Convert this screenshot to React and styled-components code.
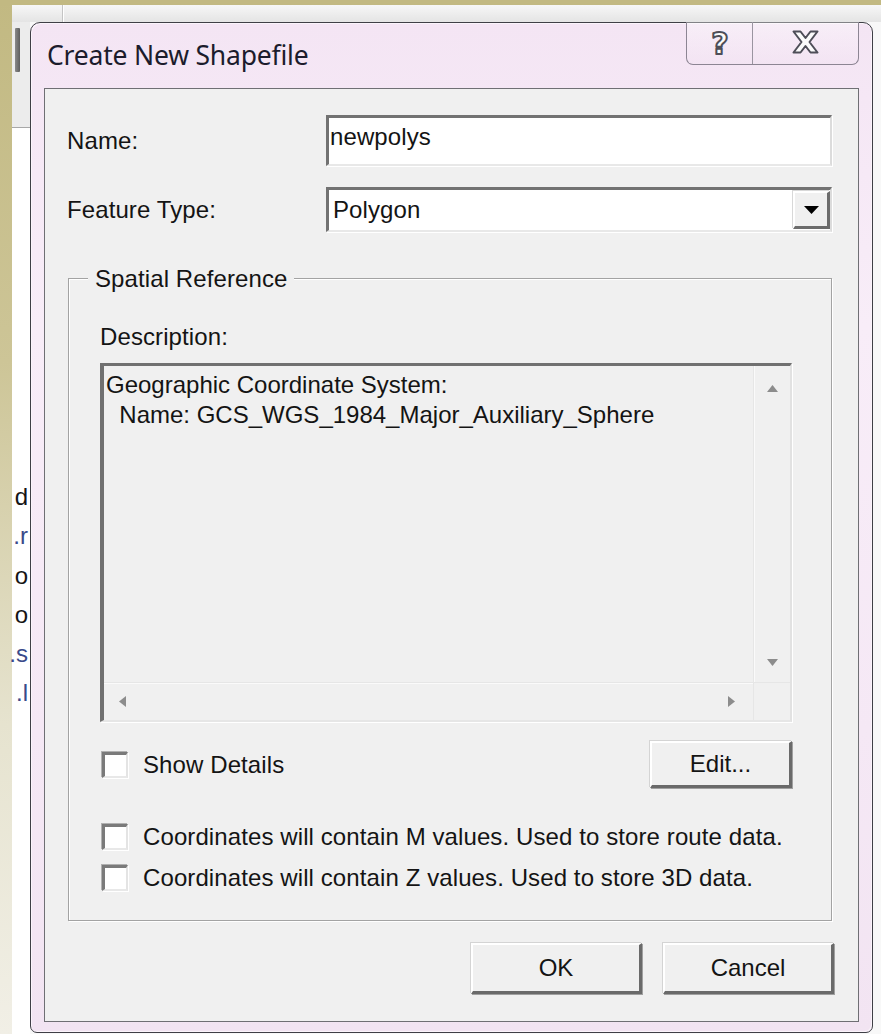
import styled, { createGlobalStyle } from "styled-components";

const GlobalStyle = createGlobalStyle`
  html, body {
    margin: 0;
    padding: 0;
    background: #c2b982;
  }
  * {
    box-sizing: border-box;
  }
`;

const Screen = styled.div`
  width: 881px;
  height: 1034px;
  display: flex;
  flex-direction: column;
  overflow: hidden;
  background: linear-gradient(180deg, #c2b982 0%, #cdc597 35%, #e6e3cf 70%, #f1efe6 100%);
  font-family: "Liberation Sans", Arial, sans-serif;
  color: #141414;
`;

const TopStrip = styled.div`
  height: 5px;
  flex: none;
  background: #c2b982;
`;

const Desk = styled.div`
  flex: 1;
  display: flex;
  padding-left: 12px;
  min-height: 0;
`;

const BackWindow = styled.div`
  flex: 1;
  display: flex;
  flex-direction: column;
  background: #f8f8f8;
`;

const BackBar = styled.div`
  height: 17px;
  flex: none;
  display: flex;
  background: linear-gradient(180deg, #f7f7f7, #e4e4e4);
`;

const BackBarCell = styled.div`
  width: 51px;
  border-right: 1px solid #c4c4c4;
  box-shadow: 1px 0 0 #ffffff;
`;

const BackBody = styled.div`
  flex: 1;
  display: flex;
  min-height: 0;
`;

const Gutter = styled.div`
  width: 18px;
  flex: none;
  display: flex;
  flex-direction: column;
  background: #ffffff;
`;

const GutterHead = styled.div`
  height: 106px;
  flex: none;
  display: flex;
  padding: 6px 0 0 3px;
  background: #ececec;
  border-bottom: 1px solid #a8a8a8;
`;

const GutterBar = styled.div`
  width: 5px;
  height: 44px;
  background: linear-gradient(90deg, #8a8a8a, #5e5e5e);
  border-radius: 1px;
`;

const GutterText = styled.div`
  padding: 349px 2px 0 0;
  display: flex;
  flex-direction: column;
  align-items: flex-end;
  font-size: 24px;
  line-height: 39.3px;
  white-space: nowrap;
`;

const Fragment = styled.span`
  color: ${(p) => (p.$link ? "#3a4a8a" : "#151515")};
`;

const Dialog = styled.div`
  width: 843px;
  flex: none;
  height: 1011px;
  display: flex;
  flex-direction: column;
  padding: 0 13px 10px 13px;
  border: 1px solid #3f3f46;
  border-radius: 10px 10px 7px 7px;
  background: linear-gradient(180deg, #f4e5f4 0%, #f8edf8 30%, #f5e8f5 70%, #f2e4f2 100%);
  box-shadow: inset 1px 1px 0 #fbf4fb, inset -1px -1px 0 #fbf4fb;
`;

const TitleBar = styled.div`
  height: 65px;
  flex: none;
  display: flex;
  justify-content: space-between;
  align-items: flex-start;
`;

const Title = styled.div`
  margin: 15px 0 0 3px;
  font-family: "Noto Sans", "Open Sans", sans-serif;
  font-size: 26.5px;
  line-height: 34px;
  color: #1c1c2c;
  letter-spacing: -0.2px;
`;

const CaptionGroup = styled.div`
  display: flex;
  height: 43px;
  margin: -1px 0 0 0;
  border: 1px solid #8c8593;
  border-top: none;
  border-radius: 0 0 7px 7px;
  background: linear-gradient(180deg, rgba(255, 255, 255, 0.35), rgba(240, 225, 240, 0.4));
  overflow: hidden;
`;

const CaptionButton = styled.div`
  width: ${(p) => p.$w}px;
  display: flex;
  align-items: center;
  justify-content: center;
  padding-bottom: 2px;
  & + & {
    border-left: 1px solid #9a94a0;
  }
`;

const Client = styled.div`
  flex: 1;
  display: flex;
  flex-direction: column;
  padding: 26px 26px 0 22px;
  border: 1px solid #6f6f74;
  background: #f0f0f0;
  font-size: 24px;
  letter-spacing: 0.1px;
`;

const FieldRow = styled.div`
  display: grid;
  grid-template-columns: 259px 1fr;
  align-items: center;
  height: ${(p) => p.$h}px;
  margin-bottom: ${(p) => p.$mb || 0}px;
`;

const Label = styled.div`
  line-height: 28px;
`;

const Sunken = styled.div`
  height: 100%;
  display: flex;
  align-items: ${(p) => (p.$top ? "flex-start" : "center")};
  background: #ffffff;
  border-top: 3px solid #727272;
  border-left: 3px solid #727272;
  border-right: 2px solid #dcdcdc;
  border-bottom: 2px solid #e8e8e8;
  box-shadow: 1px 1px 0 #ffffff;
`;

const FieldText = styled.div`
  flex: 1;
  padding: ${(p) => p.$pad};
  line-height: 28px;
`;

const DropButton = styled.div`
  width: 37px;
  height: 38px;
  display: flex;
  align-items: center;
  justify-content: center;
  background: #f0f0f0;
  border-top: 2px solid #ffffff;
  border-left: 2px solid #ffffff;
  border-right: 3px solid #6c6c6c;
  border-bottom: 3px solid #6c6c6c;
  box-shadow: -1px -1px 0 #d8d8d8;
`;

const Group = styled.div`
  margin: 46px 0 0 1px;
  display: flex;
  flex-direction: column;
  padding: 0 39px 28px 31px;
  border: 1px solid #a3a3a3;
  box-shadow: inset 1px 1px 0 #ffffff, 1px 1px 0 #ffffff;
`;

const Legend = styled.div`
  align-self: flex-start;
  margin: -14px 0 0 -12px;
  padding: 0 7px;
  line-height: 28px;
  background: #f0f0f0;
`;

const Caption = styled.div`
  margin-top: 30px;
  line-height: 28px;
`;

const DescBox = styled.div`
  margin-top: 12px;
  height: 359px;
  display: grid;
  grid-template-columns: 1fr 37px;
  grid-template-rows: 1fr 38px;
  background: #f0f0f0;
  border-top: 3px solid #707070;
  border-left: 4px solid #707070;
  border-right: 2px solid #e2e2e2;
  border-bottom: 2px solid #e6e6e6;
  box-shadow: 1px 1px 0 #ffffff;
`;

const DescText = styled.div`
  padding: 4px 0 0 2px;
  line-height: 30px;
  letter-spacing: 0;
  white-space: pre;
  overflow: hidden;
`;

const VScroll = styled.div`
  display: flex;
  flex-direction: column;
  justify-content: space-between;
  border-left: 1px solid #e6e6e6;
  box-shadow: inset 1px 0 0 #fafafa;
`;

const HScroll = styled.div`
  display: flex;
  justify-content: space-between;
  border-top: 1px solid #e6e6e6;
  box-shadow: inset 0 1px 0 #fafafa;
`;

const Corner = styled.div`
  border-top: 1px solid #e6e6e6;
  border-left: 1px solid #e6e6e6;
`;

const ArrowCell = styled.div`
  width: ${(p) => p.$w || 37}px;
  height: ${(p) => p.$h || 37}px;
  display: flex;
  align-items: center;
  justify-content: center;
`;

const OptionRow = styled.div`
  display: flex;
  align-items: center;
  justify-content: space-between;
  height: ${(p) => p.$h}px;
  margin-top: ${(p) => p.$mt}px;
`;

const CheckLabel = styled.label`
  display: flex;
  align-items: center;
  gap: 15px;
  line-height: 28px;
  margin-left: 2px;
`;

const CheckBox = styled.span`
  width: 26px;
  height: 26px;
  flex: none;
  background: #ffffff;
  border-top: 3px solid #7a7a7a;
  border-left: 3px solid #7a7a7a;
  border-right: 2px solid #e4e4e4;
  border-bottom: 2px solid #e8e8e8;
  box-shadow: -1px -1px 0 #b0b0b0, 1px 1px 0 #ffffff;
`;

const Button = styled.button`
  width: ${(p) => p.$w}px;
  height: ${(p) => p.$h}px;
  padding: 0;
  font-family: "Liberation Sans", Arial, sans-serif;
  font-size: 24px;
  color: #141414;
  background: #f0f0f0;
  border-top: 2px solid #ffffff;
  border-left: 2px solid #ffffff;
  border-right: 3px solid #6a6a6a;
  border-bottom: 3px solid #6a6a6a;
  box-shadow: -1px -1px 0 #d4d4d4, 1px 1px 0 #a0a0a0;
  border-radius: 0;
`;

const ButtonRow = styled.div`
  display: flex;
  justify-content: flex-end;
  gap: 21px;
  margin: 22px -2px 0 0;
`;

const Triangle = ({ dir, color = "#8c8c8c", w = 11, h = 7 }) => {
  const pts = {
    up: `0,${h} ${w / 2},0 ${w},${h}`,
    down: `0,0 ${w},0 ${w / 2},${h}`,
    left: `${h},0 ${h},${w} 0,${w / 2}`,
    right: `0,0 0,${w} ${h},${w / 2}`,
  }[dir];
  const vertical = dir === "up" || dir === "down";
  return (
    <svg width={vertical ? w : h} height={vertical ? h : w}>
      <polygon points={pts} fill={color} />
    </svg>
  );
};

const HelpIcon = () => (
  <svg width="28" height="36" viewBox="0 0 28 36">
    <text
      x="14"
      y="30"
      textAnchor="middle"
      fontFamily="DejaVu Sans, sans-serif"
      fontWeight="bold"
      fontSize="30"
      fill="#fbfbfb"
      stroke="#4e4e58"
      strokeWidth="2"
      strokeLinejoin="round"
    >
      ?
    </text>
  </svg>
);

const CloseIcon = () => (
  <svg width="27" height="24" viewBox="0 0 27 24">
    <polygon
      points="1.5,1.5 8.5,1.5 13.5,8 18.5,1.5 25.5,1.5 17.5,12 25.5,22.5 18.5,22.5 13.5,16 8.5,22.5 1.5,22.5 9.5,12"
      fill="#fbfbfb"
      stroke="#4e4e58"
      strokeWidth="2"
      strokeLinejoin="round"
    />
  </svg>
);

const fragments = [
  { t: "d" },
  { t: ".r", link: true },
  { t: "o" },
  { t: "o" },
  { t: ".s", link: true },
  { t: ".l", link: true },
];

export default function App() {
  return (
    <>
      <GlobalStyle />
      <Screen>
        <TopStrip />
        <Desk>
          <BackWindow>
            <BackBar>
              <BackBarCell />
            </BackBar>
            <BackBody>
              <Gutter>
                <GutterHead>
                  <GutterBar />
                </GutterHead>
                <GutterText>
                  {fragments.map((f, i) => (
                    <Fragment key={i} $link={f.link}>
                      {f.t}
                    </Fragment>
                  ))}
                </GutterText>
              </Gutter>

              <Dialog>
                <TitleBar>
                  <Title>Create New Shapefile</Title>
                  <CaptionGroup>
                    <CaptionButton $w={65}>
                      <HelpIcon />
                    </CaptionButton>
                    <CaptionButton $w={106}>
                      <CloseIcon />
                    </CaptionButton>
                  </CaptionGroup>
                </TitleBar>

                <Client>
                  <FieldRow $h={51} $mb={21}>
                    <Label>Name:</Label>
                    <Sunken $top>
                      <FieldText $pad="5px 0 0 1px">newpolys</FieldText>
                    </Sunken>
                  </FieldRow>

                  <FieldRow $h={45}>
                    <Label>Feature Type:</Label>
                    <Sunken>
                      <FieldText $pad="0 0 0 4px">Polygon</FieldText>
                      <DropButton>
                        <Triangle dir="down" color="#000" w={15} h={8} />
                      </DropButton>
                    </Sunken>
                  </FieldRow>

                  <Group>
                    <Legend>Spatial Reference</Legend>
                    <Caption>Description:</Caption>
                    <DescBox>
                      <DescText>
                        {"Geographic Coordinate System:\n  Name: GCS_WGS_1984_Major_Auxiliary_Sphere"}
                      </DescText>
                      <VScroll>
                        <ArrowCell $h={44}>
                          <Triangle dir="up" />
                        </ArrowCell>
                        <ArrowCell $h={40}>
                          <Triangle dir="down" />
                        </ArrowCell>
                      </VScroll>
                      <HScroll>
                        <ArrowCell $w={36} $h={37}>
                          <Triangle dir="left" />
                        </ArrowCell>
                        <ArrowCell $w={44} $h={37}>
                          <Triangle dir="right" />
                        </ArrowCell>
                      </HScroll>
                      <Corner />
                    </DescBox>

                    <OptionRow $h={47} $mt={19}>
                      <CheckLabel>
                        <CheckBox />
                        Show Details
                      </CheckLabel>
                      <Button $w={142} $h={47}>
                        Edit...
                      </Button>
                    </OptionRow>

                    <OptionRow $h={28} $mt={35}>
                      <CheckLabel>
                        <CheckBox />
                        Coordinates will contain M values. Used to store route data.
                      </CheckLabel>
                    </OptionRow>
                    <OptionRow $h={28} $mt={13}>
                      <CheckLabel>
                        <CheckBox />
                        Coordinates will contain Z values. Used to store 3D data.
                      </CheckLabel>
                    </OptionRow>
                  </Group>

                  <ButtonRow>
                    <Button $w={171} $h={51}>
                      OK
                    </Button>
                    <Button $w={171} $h={51}>
                      Cancel
                    </Button>
                  </ButtonRow>
                </Client>
              </Dialog>
            </BackBody>
          </BackWindow>
        </Desk>
      </Screen>
    </>
  );
}
